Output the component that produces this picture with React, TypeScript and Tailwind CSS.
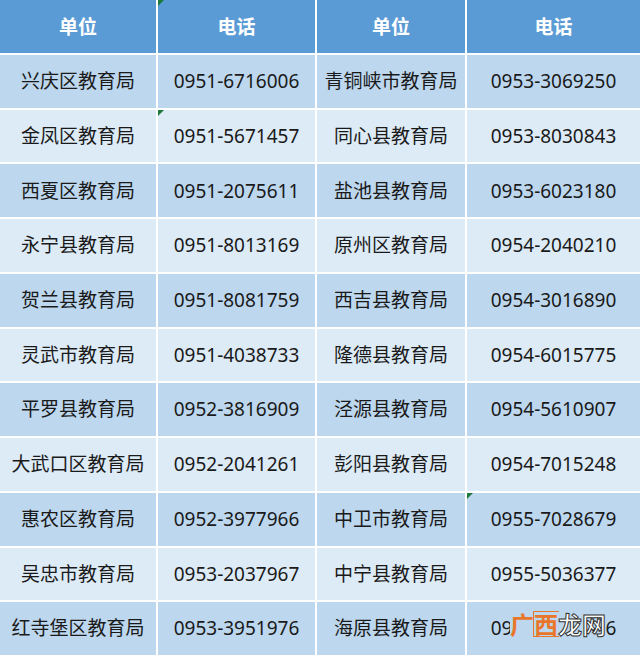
import React from "react";

const rows: [string, string, string, string][] = [
  ["兴庆区教育局", "0951-6716006", "青铜峡市教育局", "0953-3069250"],
  ["金凤区教育局", "0951-5671457", "同心县教育局", "0953-8030843"],
  ["西夏区教育局", "0951-2075611", "盐池县教育局", "0953-6023180"],
  ["永宁县教育局", "0951-8013169", "原州区教育局", "0954-2040210"],
  ["贺兰县教育局", "0951-8081759", "西吉县教育局", "0954-3016890"],
  ["灵武市教育局", "0951-4038733", "隆德县教育局", "0954-6015775"],
  ["平罗县教育局", "0952-3816909", "泾源县教育局", "0954-5610907"],
  ["大武口区教育局", "0952-2041261", "彭阳县教育局", "0954-7015248"],
  ["惠农区教育局", "0952-3977966", "中卫市教育局", "0955-7028679"],
  ["吴忠市教育局", "0953-2037967", "中宁县教育局", "0955-5036377"],
  ["红寺堡区教育局", "0953-3951976", "海原县教育局", "0955-7021976"],
];

const font = { fontFamily: '"Noto Sans", "Noto Sans CJK SC", sans-serif' };

function Tri() {
  return (
    <span className="absolute left-0 top-0 w-0 h-0 border-t-[6px] border-t-[#1e7a3c] border-r-[6px] border-r-transparent" />
  );
}

export default function App() {
  const marks = new Set(["0-1", "2-1", "9-3"]);
  const header = ["单位", "电话", "单位", "电话"];
  return (
    <div
      className="relative w-[640px] h-[655px] bg-white grid grid-cols-[156px_157px_148px_1fr] grid-rows-[53px_repeat(11,1fr)] gap-[2px] text-[19px] text-[#1a1a1a]"
      style={font}
    >
      {header.map((h, i) => (
        <div
          key={"h" + i}
          className="relative bg-[#5b9bd5] text-white font-bold flex items-center justify-center pt-[2px]"
        >
          {marks.has(`0-${i}`) && <Tri />}
          {h}
        </div>
      ))}
      {rows.map((r, ri) =>
        r.map((c, ci) => (
          <div
            key={ri + "-" + ci}
            className={`relative flex items-center justify-center whitespace-nowrap ${
              ri % 2 === 0 ? "bg-[#bdd7ee]" : "bg-[#ddebf7]"
            }`}
          >
            {marks.has(`${ri + 1}-${ci}`) && <Tri />}
            {c}
          </div>
        ))
      )}
      <div
        className="absolute left-[510px] top-[612px] flex items-center text-[24px] leading-none font-bold"
        style={{ fontFamily: '"Noto Sans CJK SC", sans-serif' }}
      >
        <span className="text-[#e8762b] bg-[#bdd7ee]">广</span>
        <span className="text-[#e8762b] bg-[#bdd7ee] outline outline-1 outline-[#e8762b]">西</span>
        <span className="text-white bg-[#bdd7ee] [-webkit-text-stroke:1px_#333]">龙网</span>
      </div>
    </div>
  );
}
